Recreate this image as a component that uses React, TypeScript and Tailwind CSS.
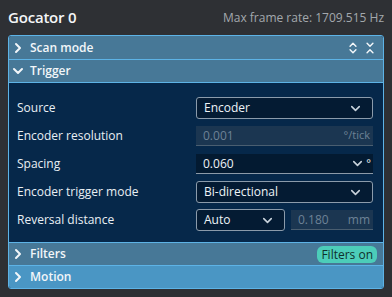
import { ChevronDown, ChevronRight, ChevronsDownUp, ChevronsUpDown } from "lucide-react";

function SectionHeader({
  title,
  open,
  tone = "bg-[#477897]",
  height = "h-[22px]",
  children,
}: {
  title: string;
  open?: boolean;
  tone?: string;
  height?: string;
  children?: React.ReactNode;
}) {
  return (
    <div className={`flex items-center pl-[1px] pr-[6px] text-[12px] font-semibold text-[#f2f6f9] ${height} ${tone}`}>
      {open ? (
        <ChevronDown size={16} strokeWidth={3} className="mr-[4px]" />
      ) : (
        <ChevronRight size={16} strokeWidth={3} className="mr-[4px]" />
      )}
      <span>{title}</span>
      <div className="ml-auto flex items-center gap-[3px]">{children}</div>
    </div>
  );
}

function Select({ value, className = "" }: { value: string; className?: string }) {
  return (
    <div
      className={`flex h-[22px] items-center rounded-[3px] border border-[#8b9bab] bg-[#041b33] pl-[7px] pr-[9px] text-[12px] text-[#eef3f7] ${className}`}
    >
      <span>{value}</span>
      <ChevronDown size={15} strokeWidth={2.5} className="ml-auto text-[#c9d3dc]" />
    </div>
  );
}

function Row({ label, children }: { label: string; children: React.ReactNode }) {
  return (
    <div className="flex h-[22px] items-center">
      <span className="w-[179px] shrink-0 text-[12px] text-[#e9eff4]">{label}</span>
      <div className="flex flex-1 items-center gap-[6px]">{children}</div>
    </div>
  );
}

export default function App() {
  return (
    <div
      className="h-[297px] w-[392px] bg-[#2e3034] px-[8px]"
      style={{ fontFamily: '"Open Sans", "Noto Sans", sans-serif' }}
    >
      <div className="flex h-[35px] items-center justify-between">
        <span className="text-[15px] font-semibold tracking-[-0.2px] text-[#f4f6f8]">Gocator 0</span>
        <span className="text-[12px] text-[#a3a8ad]">Max frame rate: 1709.515 Hz</span>
      </div>

      <div className="overflow-hidden rounded-[3px] border border-[#5db3e6] bg-[#06284a]">
        <SectionHeader title="Scan mode" height="h-[23px]">
          <ChevronsUpDown size={14} strokeWidth={2.5} />
          <ChevronsDownUp size={14} strokeWidth={2.5} />
        </SectionHeader>
        <div className="h-px bg-[#5db3e6]" />
        <SectionHeader title="Trigger" open />
        <div className="h-px bg-[#5db3e6]" />

        <div className="flex flex-col gap-[6px] pb-[11px] pl-[8px] pr-[10px] pt-[14px]">
          <Row label="Source">
            <Select value="Encoder" className="flex-1" />
          </Row>
          <Row label="Encoder resolution">
            <div className="flex h-[20px] flex-1 items-center border-b border-[#4a5e70] bg-[#1b3651] pl-[7px] pr-[3px] text-[12px] text-[#6d8296]">
              <span>0.001</span>
              <span className="ml-auto text-[11px]">°/tick</span>
            </div>
          </Row>
          <Row label="Spacing">
            <div className="flex h-[20px] flex-1 items-center border-b border-[#8c9aa8] bg-[#031a31] pl-[7px] pr-[2px] text-[12px] text-[#eef3f7]">
              <span>0.060</span>
              <ChevronDown size={15} strokeWidth={2.5} className="ml-auto text-[#c9d3dc]" />
              <span className="ml-[1px] text-[11px]">°</span>
            </div>
          </Row>
          <Row label="Encoder trigger mode">
            <Select value="Bi-directional" className="flex-1" />
          </Row>
          <Row label="Reversal distance">
            <Select value="Auto" className="w-[89px]" />
            <div className="flex h-[20px] flex-1 items-center border-b border-[#4a5e70] bg-[#1b3651] pl-[7px] pr-[3px] text-[12px] text-[#6d8296]">
              <span>0.180</span>
              <span className="ml-auto text-[12px]">mm</span>
            </div>
          </Row>
        </div>

        <div className="h-px bg-[#5db3e6]" />
        <SectionHeader title="Filters">
          <span className="rounded-[6px] bg-[#4ccdb9] px-[4px] text-[12px] font-normal leading-[17px] text-[#10302c]">
            Filters on
          </span>
        </SectionHeader>
        <div className="h-px bg-[#5db3e6]" />
        <SectionHeader title="Motion" tone="bg-[#4a96c4]" />
      </div>
    </div>
  );
}
